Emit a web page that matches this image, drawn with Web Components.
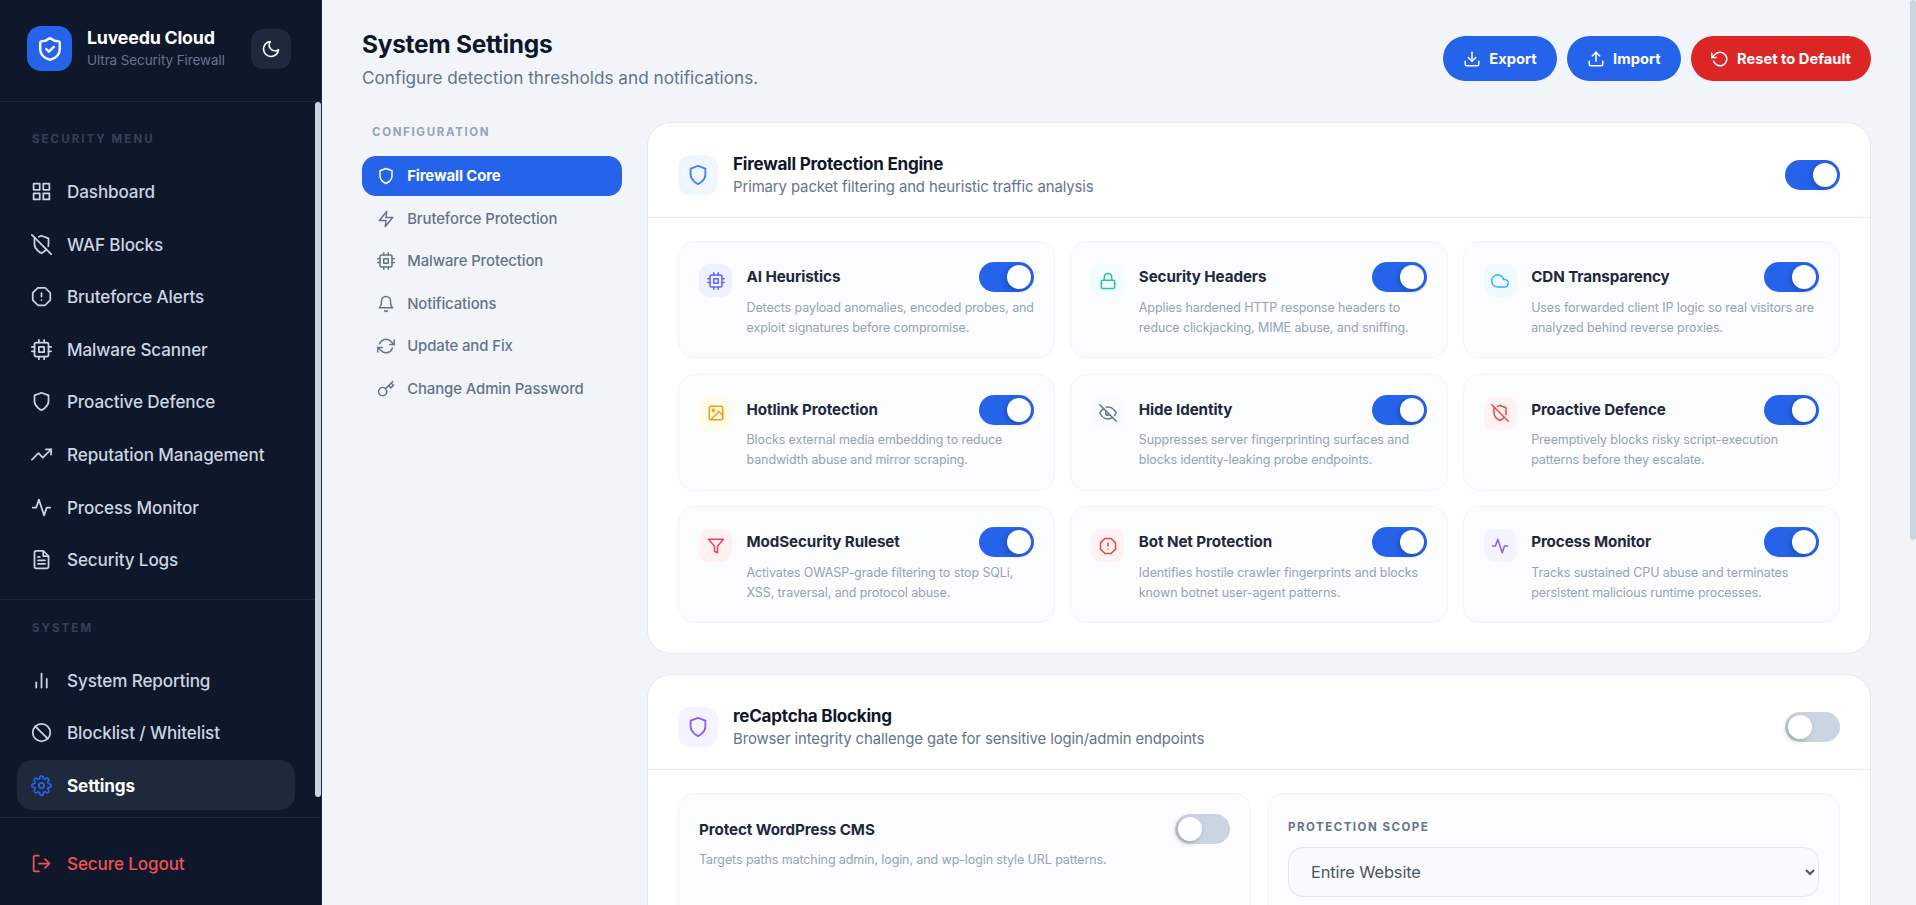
<!DOCTYPE html>
<html lang="en">
<head>
<meta charset="utf-8">
<title>System Settings</title>
<style>
    html, body{
        margin: 0;
        height: 100%;
        overflow: hidden;
        font-family: "Inter", "Liberation Sans", sans-serif;
        background: #f1f5f9;
    }
</style>
</head>
<body>

<app-shell>
    <side-bar slot="side">
        <nav-label>SECURITY MENU</nav-label>
        <nav-item icon="grid">Dashboard</nav-item>
        <nav-item icon="shieldoff">WAF Blocks</nav-item>
        <nav-item icon="octagon">Bruteforce Alerts</nav-item>
        <nav-item icon="cpu">Malware Scanner</nav-item>
        <nav-item icon="shield">Proactive Defence</nav-item>
        <nav-item icon="trending">Reputation Management</nav-item>
        <nav-item icon="activity">Process Monitor</nav-item>
        <nav-item icon="file">Security Logs</nav-item>
        <nav-divider></nav-divider>
        <nav-label>SYSTEM</nav-label>
        <nav-item icon="bars">System Reporting</nav-item>
        <nav-item icon="slash">Blocklist / Whitelist</nav-item>
        <nav-item icon="gear" active>Settings</nav-item>
    </side-bar>

    <page-head>
        <action-button slot="actions" icon="download">Export</action-button>
        <action-button slot="actions" icon="upload">Import</action-button>
        <action-button slot="actions" icon="reset" danger>Reset to Default</action-button>
    </page-head>

    <settings-layout>
        <config-menu slot="menu">
            <config-link icon="shield" active>Firewall Core</config-link>
            <config-link icon="zap">Bruteforce Protection</config-link>
            <config-link icon="cpu">Malware Protection</config-link>
            <config-link icon="bell">Notifications</config-link>
            <config-link icon="refresh">Update and Fix</config-link>
            <config-link icon="key">Change Admin Password</config-link>
        </config-menu>

        <settings-card heading="Firewall Protection Engine" sub="Primary packet filtering and heuristic traffic analysis" icon="shield" bg="#eff6ff" fg="#3b82f6" on>
            <feature-grid>
                <feature-card heading="AI Heuristics" icon="cpu" bg="#eef2ff" fg="#6366f1">Detects payload anomalies, encoded probes, and exploit signatures before compromise.</feature-card>
                <feature-card heading="Security Headers" icon="lock" bg="#f0fdfa" fg="#2dbfa8">Applies hardened HTTP response headers to reduce clickjacking, MIME abuse, and sniffing.</feature-card>
                <feature-card heading="CDN Transparency" icon="cloud" bg="#f0f9ff" fg="#22b8ee">Uses forwarded client IP logic so real visitors are analyzed behind reverse proxies.</feature-card>
                <feature-card heading="Hotlink Protection" icon="image" bg="#fffbeb" fg="#f59e0b">Blocks external media embedding to reduce bandwidth abuse and mirror scraping.</feature-card>
                <feature-card heading="Hide Identity" icon="eyeoff" bg="#f8fafc" fg="#64748b">Suppresses server fingerprinting surfaces and blocks identity-leaking probe endpoints.</feature-card>
                <feature-card heading="Proactive Defence" icon="shieldoff" bg="#fef2f2" fg="#ef4444">Preemptively blocks risky script-execution patterns before they escalate.</feature-card>
                <feature-card heading="ModSecurity Ruleset" icon="filter" bg="#fff1f2" fg="#f43f5e">Activates OWASP-grade filtering to stop SQLi, XSS, traversal, and protocol abuse.</feature-card>
                <feature-card heading="Bot Net Protection" icon="octagon" bg="#fef2f2" fg="#ef4444">Identifies hostile crawler fingerprints and blocks known botnet user-agent patterns.</feature-card>
                <feature-card heading="Process Monitor" icon="activity" bg="#f5f3ff" fg="#8b5cf6">Tracks sustained CPU abuse and terminates persistent malicious runtime processes.</feature-card>
            </feature-grid>
        </settings-card>

        <settings-card heading="reCaptcha Blocking" sub="Browser integrity challenge gate for sensitive login/admin endpoints" icon="shield" bg="#f5f3ff" fg="#8b5cf6">
            <captcha-panels></captcha-panels>
        </settings-card>
    </settings-layout>
</app-shell>

<script>
const ICONS = {
    grid: '<rect x="3" y="3" width="7" height="7"/><rect x="14" y="3" width="7" height="7"/><rect x="14" y="14" width="7" height="7"/><rect x="3" y="14" width="7" height="7"/>',
    shieldoff: '<path d="M19.69 14a6.9 6.9 0 0 0 .31-2V5l-8-3-3.16 1.18"/><path d="M4.73 4.73L4 5v7c0 6 8 10 8 10a20.29 20.29 0 0 0 5.62-4.38"/><line x1="1" y1="1" x2="23" y2="23"/>',
    octagon: '<polygon points="7.86 2 16.14 2 22 7.86 22 16.14 16.14 22 7.86 22 2 16.14 2 7.86"/><line x1="12" y1="8" x2="12" y2="12"/><line x1="12" y1="16" x2="12.01" y2="16"/>',
    cpu: '<rect x="4" y="4" width="16" height="16" rx="2"/><rect x="9" y="9" width="6" height="6"/><line x1="9" y1="1" x2="9" y2="4"/><line x1="15" y1="1" x2="15" y2="4"/><line x1="9" y1="20" x2="9" y2="23"/><line x1="15" y1="20" x2="15" y2="23"/><line x1="20" y1="9" x2="23" y2="9"/><line x1="20" y1="14" x2="23" y2="14"/><line x1="1" y1="9" x2="4" y2="9"/><line x1="1" y1="14" x2="4" y2="14"/>',
    shield: '<path d="M12 22s8-4 8-10V5l-8-3-8 3v7c0 6 8 10 8 10z"/>',
    shieldcheck: '<path d="M21 12.5c0 5.5-4 8-8.6 9.4a1.2 1.2 0 0 1-.8 0C7 20.5 3 18 3 12.5V6a1 1 0 0 1 1-1c2.5 0 5.5-1.2 7.3-2.7a1.1 1.1 0 0 1 1.4 0C14.5 3.8 17.5 5 20 5a1 1 0 0 1 1 1z"/><path d="m8.5 12 2.5 2.5 4.5-4.5"/>',
    trending: '<polyline points="23 6 13.5 15.5 8.5 10.5 1 18"/><polyline points="17 6 23 6 23 12"/>',
    activity: '<polyline points="22 12 18 12 15 21 9 3 6 12 2 12"/>',
    file: '<path d="M14 2H6a2 2 0 0 0-2 2v16a2 2 0 0 0 2 2h12a2 2 0 0 0 2-2V8z"/><polyline points="14 2 14 8 20 8"/><line x1="16" y1="13" x2="8" y2="13"/><line x1="16" y1="17" x2="8" y2="17"/><polyline points="10 9 9 9 8 9"/>',
    bars: '<line x1="18" y1="20" x2="18" y2="10"/><line x1="12" y1="20" x2="12" y2="4"/><line x1="6" y1="20" x2="6" y2="14"/>',
    slash: '<circle cx="12" cy="12" r="10"/><line x1="4.93" y1="4.93" x2="19.07" y2="19.07"/>',
    gear: '<circle cx="12" cy="12" r="3"/><path d="M19.4 15a1.65 1.65 0 0 0 .33 1.82l.06.06a2 2 0 0 1 0 2.83 2 2 0 0 1-2.83 0l-.06-.06a1.65 1.65 0 0 0-1.82-.33 1.65 1.65 0 0 0-1 1.51V21a2 2 0 0 1-2 2 2 2 0 0 1-2-2v-.09A1.65 1.65 0 0 0 9 19.4a1.65 1.65 0 0 0-1.82.33l-.06.06a2 2 0 0 1-2.83 0 2 2 0 0 1 0-2.83l.06-.06a1.65 1.65 0 0 0 .33-1.82 1.65 1.65 0 0 0-1.51-1H3a2 2 0 0 1-2-2 2 2 0 0 1 2-2h.09A1.65 1.65 0 0 0 4.6 9a1.65 1.65 0 0 0-.33-1.82l-.06-.06a2 2 0 0 1 0-2.83 2 2 0 0 1 2.83 0l.06.06a1.65 1.65 0 0 0 1.82.33H9a1.65 1.65 0 0 0 1-1.51V3a2 2 0 0 1 2-2 2 2 0 0 1 2 2v.09a1.65 1.65 0 0 0 1 1.51 1.65 1.65 0 0 0 1.82-.33l.06-.06a2 2 0 0 1 2.83 0 2 2 0 0 1 0 2.83l-.06.06a1.65 1.65 0 0 0-.33 1.82V9a1.65 1.65 0 0 0 1.51 1H21a2 2 0 0 1 2 2 2 2 0 0 1-2 2h-.09a1.65 1.65 0 0 0-1.51 1z"/>',
    logout: '<path d="M9 21H5a2 2 0 0 1-2-2V5a2 2 0 0 1 2-2h4"/><polyline points="16 17 21 12 16 7"/><line x1="21" y1="12" x2="9" y2="12"/>',
    moon: '<path d="M21 12.79A9 9 0 1 1 11.21 3 7 7 0 0 0 21 12.79z"/>',
    zap: '<polygon points="13 2 3 14 12 14 11 22 21 10 12 10 13 2"/>',
    bell: '<path d="M18 8A6 6 0 0 0 6 8c0 7-3 9-3 9h18s-3-2-3-9"/><path d="M13.73 21a2 2 0 0 1-3.46 0"/>',
    refresh: '<polyline points="23 4 23 10 17 10"/><polyline points="1 20 1 14 7 14"/><path d="M3.51 9a9 9 0 0 1 14.85-3.36L23 10M1 14l4.64 4.36A9 9 0 0 0 20.49 15"/>',
    key: '<path d="M21 2l-2 2m-7.61 7.61a5.5 5.5 0 1 1-7.778 7.778 5.5 5.5 0 0 1 7.777-7.777zm0 0L15.5 7.5m0 0l3 3L22 7l-3-3m-3.5 3.5L19 4"/>',
    download: '<path d="M21 15v4a2 2 0 0 1-2 2H5a2 2 0 0 1-2-2v-4"/><polyline points="7 10 12 15 17 10"/><line x1="12" y1="15" x2="12" y2="3"/>',
    upload: '<path d="M21 15v4a2 2 0 0 1-2 2H5a2 2 0 0 1-2-2v-4"/><polyline points="17 8 12 3 7 8"/><line x1="12" y1="3" x2="12" y2="15"/>',
    reset: '<polyline points="1 4 1 10 7 10"/><path d="M3.51 15a9 9 0 1 0 2.13-9.36L1 10"/>',
    lock: '<rect x="3" y="11" width="18" height="11" rx="2"/><path d="M7 11V7a5 5 0 0 1 10 0v4"/>',
    cloud: '<path d="M18 10h-1.26A8 8 0 1 0 9 20h9a5 5 0 0 0 0-10z"/>',
    image: '<rect x="3" y="3" width="18" height="18" rx="2"/><circle cx="8.5" cy="8.5" r="1.5"/><polyline points="21 15 16 10 5 21"/>',
    eyeoff: '<path d="M17.94 17.94A10.07 10.07 0 0 1 12 20c-7 0-11-8-11-8a18.45 18.45 0 0 1 5.06-5.94M9.9 4.24A9.12 9.12 0 0 1 12 4c7 0 11 8 11 8a18.5 18.5 0 0 1-2.16 3.19m-6.72-1.07a3 3 0 1 1-4.24-4.24"/><line x1="1" y1="1" x2="23" y2="23"/>',
    filter: '<polygon points="22 3 2 3 10 12.46 10 19 14 21 14 12.46 22 3"/>'
}

function icon(name, size, sw = 2){
    return `<svg xmlns="http://www.w3.org/2000/svg" width="${size}" height="${size}" viewBox="0 0 24 24" fill="none" stroke="currentColor" stroke-width="${sw}" stroke-linecap="round" stroke-linejoin="round" style="display:block;flex:none">${ICONS[name]}</svg>`
}

class Base extends HTMLElement{
    constructor(){
        super()
        this._shadowDom = this.attachShadow({mode: 'open'})
    }
}

class AppShell extends Base{
    connectedCallback(){
        this._shadowDom.innerHTML = `
        <style>
            :host{ display: flex; height: 100vh; }
            .main{
                flex: 1;
                min-width: 0;
                overflow: hidden;
                background: #f1f5f9;
            }
            .inner{
                min-height: 1516px;
                box-sizing: border-box;
                padding: 26px 39px 0 40px;
            }
            /* scrollbar drawn by hand, the headless shot hides the native one */
            .track{ flex: none; width: 6px; background: #f1f5f9; }
            .thumb{ height: 540px; background: #cbd5e1; border-radius: 3px; }
        </style>
        <slot name="side"></slot>
        <div class="main"><div class="inner"><slot></slot></div></div>
        <div class="track"><div class="thumb"></div></div>
        `
    }
}

class SideBar extends Base{
    connectedCallback(){
        this._shadowDom.innerHTML = `
        <style>
            :host{
                display: flex;
                flex-direction: column;
                flex: none;
                width: 322px;
                height: 100vh;
                box-sizing: border-box;
                background: #0f172a;
                border-right: 1px solid #1e293b;
            }
            .brand{
                display: flex;
                align-items: flex-start;
                height: 102px;
                box-sizing: border-box;
                padding: 26px 30px 0 27px;
                border-bottom: 1px solid #1e293b;
                flex: none;
            }
            .logo{
                width: 45px;
                height: 45px;
                border-radius: 14px;
                background: #2563eb;
                color: #fff;
                display: flex;
                align-items: center;
                justify-content: center;
                flex: none;
            }
            .names{ margin-left: 15px; flex: 1; }
            .name{
                color: #fff;
                font-size: 17.8px;
                font-weight: 700;
                line-height: 24px;
                letter-spacing: -.2px;
            }
            .tag{
                color: #64748b;
                font-size: 13.5px;
                line-height: 18px;
                margin-top: 1px;
                letter-spacing: -.1px;
                white-space: nowrap;
            }
            .moon{
                width: 40px;
                height: 40px;
                margin-top: 3px;
                border-radius: 12px;
                background: #1e293b;
                color: #fff;
                display: flex;
                align-items: center;
                justify-content: center;
                flex: none;
            }
            .row{
                flex: 1;
                min-height: 0;
                display: flex;
            }
            .scroll{
                flex: 1;
                min-width: 0;
                overflow: hidden;
                padding: 29px 20px 0 17px;
            }
            .thumb{
                flex: none;
                width: 6px;
                height: 695px;
                background: #cbd5e1;
                border-radius: 3px;
            }
            .foot{
                flex: none;
                height: 88px;
                box-sizing: border-box;
                padding: 20px 26px 0 17px;
                border-top: 1px solid #1e293b;
            }
        </style>
        <div class="brand">
            <div class="logo">${icon('shieldcheck', 26, 2.2)}</div>
            <div class="names">
                <div class="name">Luveedu Cloud</div>
                <div class="tag">Ultra Security Firewall</div>
            </div>
            <div class="moon">${icon('moon', 20)}</div>
        </div>
        <div class="row">
            <div class="scroll"><slot></slot></div>
            <div class="thumb"></div>
        </div>
        <div class="foot"><nav-item icon="logout" danger>Secure Logout</nav-item></div>
        `
    }
}

class NavLabel extends Base{
    connectedCallback(){
        this._shadowDom.innerHTML = `
        <style>
            :host{
                display: block;
                padding-left: 15px;
                margin-bottom: 19.5px;
                font-size: 11.5px;
                line-height: 16px;
                font-weight: 700;
                letter-spacing: 2.05px;
                color: #334155;
            }
        </style>
        <slot></slot>
        `
    }
}

class NavDivider extends Base{
    connectedCallback(){
        this._shadowDom.innerHTML = `
        <style>
            :host{
                display: block;
                height: 1px;
                background: #1e293b;
                margin: 14.5px -20px 19.5px -17px;
            }
        </style>
        `
    }
}

class NavItem extends Base{
    connectedCallback(){
        const active = this.hasAttribute('active')
        const danger = this.hasAttribute('danger')
        this._shadowDom.innerHTML = `
        <style>
            :host{
                display: flex;
                align-items: center;
                gap: 15px;
                height: 50px;
                margin-bottom: 2.6px;
                padding-left: 14px;
                border-radius: 15px;
                font-size: 17.1px;
                font-weight: 500;
                letter-spacing: -.12px;
                white-space: nowrap;
                color: ${danger ? '#f05252' : '#cbd5e1'};
                ${active ? 'background:#1e293b;color:#fff;font-weight:700;' : ''}
            }
            .ic{ color: ${danger ? '#f05252' : active ? '#2563eb' : '#cbd5e1'}; }
        </style>
        <span class="ic">${icon(this.getAttribute('icon'), 21)}</span>
        <slot></slot>
        `
    }
}

class PageHead extends Base{
    connectedCallback(){
        this._shadowDom.innerHTML = `
        <style>
            :host{
                display: flex;
                justify-content: space-between;
                align-items: flex-start;
                height: 96px;
            }
            h1{
                margin: 0;
                font-size: 24.5px;
                line-height: 36px;
                font-weight: 700;
                color: #0f172a;
                letter-spacing: -.3px;
            }
            p{
                margin: 0;
                font-size: 17.2px;
                line-height: 32px;
                color: #64748b;
                letter-spacing: 0;
            }
            .actions{
                display: flex;
                gap: 10.5px;
                margin-top: 10px;
            }
        </style>
        <div>
            <h1>System Settings</h1>
            <p>Configure detection thresholds and notifications.</p>
        </div>
        <div class="actions"><slot name="actions"></slot></div>
        `
    }
}

class ActionButton extends Base{
    connectedCallback(){
        this._shadowDom.innerHTML = `
        <style>
            :host{
                display: inline-flex;
                align-items: center;
                gap: 8px;
                height: 45px;
                padding: 0 20px;
                border-radius: 23px;
                color: #fff;
                font-size: 14.7px;
                font-weight: 700;
                white-space: nowrap;
                background: ${this.hasAttribute('danger') ? '#dc2626' : '#2563eb'};
            }
        </style>
        ${icon(this.getAttribute('icon'), 18)}
        <slot></slot>
        `
    }
}

class SettingsLayout extends Base{
    connectedCallback(){
        this._shadowDom.innerHTML = `
        <style>
            :host{
                display: flex;
                align-items: flex-start;
                gap: 25px;
            }
            .col{
                flex: 1;
                min-width: 0;
                display: flex;
                flex-direction: column;
                gap: 20.3px;
            }
        </style>
        <slot name="menu"></slot>
        <div class="col"><slot></slot></div>
        `
    }
}

class ConfigMenu extends Base{
    connectedCallback(){
        this._shadowDom.innerHTML = `
        <style>
            :host{
                display: block;
                flex: none;
                width: 260px;
            }
            .label{
                margin: 2px 0 16px 10px;
                font-size: 11.5px;
                line-height: 16px;
                font-weight: 700;
                letter-spacing: 1.65px;
                color: #94a3b8;
            }
        </style>
        <div class="label">CONFIGURATION</div>
        <slot></slot>
        `
    }
}

class ConfigLink extends Base{
    connectedCallback(){
        const active = this.hasAttribute('active')
        this._shadowDom.innerHTML = `
        <style>
            :host{
                display: flex;
                align-items: center;
                gap: 12.2px;
                height: 40px;
                margin-bottom: 2.6px;
                padding-left: 15px;
                border-radius: 14px;
                font-size: 14.9px;
                font-weight: ${active ? 700 : 500};
                letter-spacing: -.1px;
                white-space: nowrap;
                color: ${active ? '#fff' : '#64748b'};
                background: ${active ? '#2563eb' : 'transparent'};
            }
        </style>
        ${icon(this.getAttribute('icon'), 18)}
        <slot></slot>
        `
    }
}

class LvToggle extends Base{
    connectedCallback(){
        const on = this.hasAttribute('on')
        this._shadowDom.innerHTML = `
        <style>
            :host{
                display: block;
                flex: none;
                width: 55px;
                height: 30px;
                border-radius: 15px;
                position: relative;
                background: ${on ? '#2563eb' : '#cbd5e1'};
            }
            .knob{
                position: absolute;
                top: 3px;
                ${on ? 'right: 3px;' : 'left: 3px;'}
                width: 24px;
                height: 24px;
                border-radius: 50%;
                background: #fff;
                box-shadow: -2px 2px 5px rgba(15, 23, 42, .25);
            }
        </style>
        <div class="knob"></div>
        `
    }
}

class SettingsCard extends Base{
    connectedCallback(){
        const a = n => this.getAttribute(n)
        this._shadowDom.innerHTML = `
        <style>
            :host{
                display: block;
                background: #fff;
                border: 1px solid #e2e8f0;
                border-radius: 24px;
                overflow: hidden;
            }
            .head{
                display: flex;
                align-items: flex-start;
                height: 95px;
                box-sizing: border-box;
                padding: 32px 30px 0 30px;
                border-bottom: 1px solid #e2e8f0;
            }
            .ic{
                width: 40px;
                height: 40px;
                border-radius: 12px;
                background: ${a('bg')};
                color: ${a('fg')};
                display: flex;
                align-items: center;
                justify-content: center;
                flex: none;
            }
            .txt{ flex: 1; margin-left: 15px; }
            .ttl{
                font-size: 17.1px;
                line-height: 20px;
                font-weight: 700;
                color: #0f172a;
                letter-spacing: -.25px;
                margin-top: -1px;
            }
            .sub{
                font-size: 14.9px;
                line-height: 22px;
                color: #64748b;
                letter-spacing: -.1px;
                margin-top: 2px;
            }
            lv-toggle{ margin-top: 5px; }
            .body{ padding: 23px 30px 30px; }
        </style>
        <div class="head">
            <div class="ic">${icon(a('icon'), 22)}</div>
            <div class="txt">
                <div class="ttl">${a('heading')}</div>
                <div class="sub">${a('sub')}</div>
            </div>
            <lv-toggle ${this.hasAttribute('on') ? 'on' : ''}></lv-toggle>
        </div>
        <div class="body"><slot></slot></div>
        `
    }
}

class FeatureGrid extends Base{
    connectedCallback(){
        this._shadowDom.innerHTML = `
        <style>
            :host{
                display: grid;
                grid-template-columns: repeat(3, 1fr);
                column-gap: 15px;
                row-gap: 15.5px;
            }
        </style>
        <slot></slot>
        `
    }
}

class FeatureCard extends Base{
    connectedCallback(){
        const a = n => this.getAttribute(n)
        this._shadowDom.innerHTML = `
        <style>
            :host{
                display: flex;
                align-items: flex-start;
                height: 117px;
                box-sizing: border-box;
                padding: 20px 20px 0 20px;
                background: #fbfcfe;
                border: 1px solid #f1f5f9;
                border-radius: 16px;
            }
            .ic{
                width: 33px;
                height: 33px;
                margin-top: 2px;
                border-radius: 10px;
                background: ${a('bg')};
                color: ${a('fg')};
                display: flex;
                align-items: center;
                justify-content: center;
                flex: none;
            }
            .txt{ flex: 1; min-width: 0; margin-left: 14.5px; }
            .top{
                display: flex;
                justify-content: space-between;
                align-items: flex-start;
            }
            .ttl{
                font-size: 15.2px;
                line-height: 30px;
                font-weight: 700;
                color: #1e293b;
                letter-spacing: -.1px;
                white-space: nowrap;
            }
            .desc{
                font-size: 12.5px;
                line-height: 20px;
                color: #94a3b8;
                letter-spacing: -.1px;
                margin-top: 5.5px;
            }
        </style>
        <div class="ic">${icon(a('icon'), 18)}</div>
        <div class="txt">
            <div class="top">
                <div class="ttl">${a('heading')}</div>
                <lv-toggle on></lv-toggle>
            </div>
            <div class="desc"><slot></slot></div>
        </div>
        `
    }
}

class CaptchaPanels extends Base{
    connectedCallback(){
        this._shadowDom.innerHTML = `
        <style>
            :host{
                display: grid;
                grid-template-columns: repeat(2, 1fr);
                gap: 16px;
            }
            .panel{
                height: 210px;
                box-sizing: border-box;
                padding: 20px;
                background: #fbfcfe;
                border: 1px solid #f1f5f9;
                border-radius: 16px;
            }
            .top{
                display: flex;
                justify-content: space-between;
                align-items: center;
            }
            .ttl{
                font-size: 15.2px;
                font-weight: 700;
                color: #1e293b;
                letter-spacing: -.1px;
            }
            .desc{
                font-size: 12.5px;
                line-height: 20px;
                color: #94a3b8;
                letter-spacing: -.1px;
                margin-top: 6px;
            }
            label{
                display: block;
                font-size: 11.5px;
                line-height: 16px;
                font-weight: 700;
                letter-spacing: 1.5px;
                color: #64748b;
                margin: 5px 0 12px;
            }
            select{
                display: block;
                width: 100%;
                height: 50px;
                box-sizing: border-box;
                padding: 0 18px;
                border: 1px solid #e2e8f0;
                border-radius: 15px;
                background: #f8fafc;
                font: 400 16.4px "Inter", "Liberation Sans", sans-serif;
                letter-spacing: -.1px;
                color: #4b5563;
            }
        </style>
        <div class="panel">
            <div class="top">
                <div class="ttl">Protect WordPress CMS</div>
                <lv-toggle></lv-toggle>
            </div>
            <div class="desc">Targets paths matching admin, login, and wp-login style URL patterns.</div>
        </div>
        <div class="panel">
            <label>PROTECTION SCOPE</label>
            <select>
                <option>Entire Website</option>
                <option>Login Pages Only</option>
            </select>
        </div>
        `
    }
}

customElements.define('lv-toggle', LvToggle)
customElements.define('nav-label', NavLabel)
customElements.define('nav-divider', NavDivider)
customElements.define('nav-item', NavItem)
customElements.define('side-bar', SideBar)
customElements.define('action-button', ActionButton)
customElements.define('page-head', PageHead)
customElements.define('config-link', ConfigLink)
customElements.define('config-menu', ConfigMenu)
customElements.define('feature-card', FeatureCard)
customElements.define('feature-grid', FeatureGrid)
customElements.define('captcha-panels', CaptchaPanels)
customElements.define('settings-card', SettingsCard)
customElements.define('settings-layout', SettingsLayout)
customElements.define('app-shell', AppShell)
</script>
</body>
</html>
